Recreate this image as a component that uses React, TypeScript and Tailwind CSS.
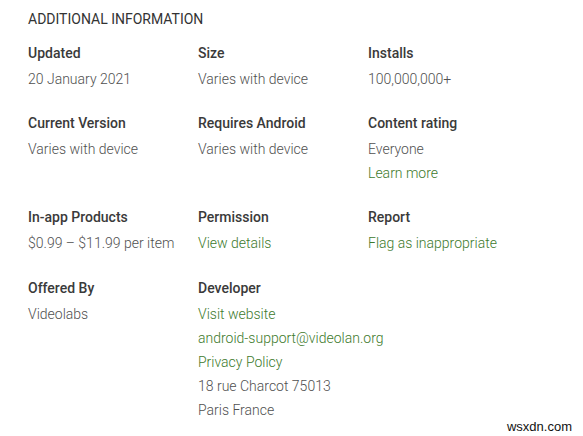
import React from "react";

type Item = { label: string; lines: { text: string; link?: boolean }[] };

const rows: Item[][] = [
  [
    { label: "Updated", lines: [{ text: "20 January 2021" }] },
    { label: "Size", lines: [{ text: "Varies with device" }] },
    { label: "Installs", lines: [{ text: "100,000,000+" }] },
  ],
  [
    { label: "Current Version", lines: [{ text: "Varies with device" }] },
    { label: "Requires Android", lines: [{ text: "Varies with device" }] },
    { label: "Content rating", lines: [{ text: "Everyone" }, { text: "Learn more", link: true }] },
  ],
  [
    { label: "In-app Products", lines: [{ text: "$0.99 – $11.99 per item" }] },
    { label: "Permission", lines: [{ text: "View details", link: true }] },
    { label: "Report", lines: [{ text: "Flag as inappropriate", link: true }] },
  ],
  [
    { label: "Offered By", lines: [{ text: "Videolabs" }] },
    {
      label: "Developer",
      lines: [
        { text: "Visit website", link: true },
        { text: "android-support@videolan.org", link: true },
        { text: "Privacy Policy", link: true },
        { text: "18 rue Charcot 75013" },
        { text: "Paris France" },
      ],
    },
  ],
];

export default function App() {
  return (
    <div
      className="relative w-[583px] h-[436px] bg-white overflow-hidden pl-[28px] pt-[7px]"
      style={{ fontFamily: "Roboto, 'Liberation Sans', sans-serif" }}
    >
      <div className="text-[14px] leading-[24px] text-[#333333]">ADDITIONAL INFORMATION</div>
      <div className="mt-[10px] flex flex-col gap-[20px]">
        {rows.map((row, i) => (
          <div key={i} className={"grid grid-cols-[170px_170px_170px]" + (i === 3 ? " mt-[1px]" : "")}>
            {row.map((item) => (
              <div key={item.label} className="flex flex-col">
                <div className="text-[14px] leading-[24px] font-medium text-[#3a3a3a]">{item.label}</div>
                <div className="mt-[2px] flex flex-col">
                  {item.lines.map((l) => (
                    <div
                      key={l.text}
                      className={
                        "text-[14px] leading-[24px] font-light whitespace-nowrap " +
                        (l.link ? "text-[#3d7a2c]" : "text-[#505050]")
                      }
                    >
                      {l.text}
                    </div>
                  ))}
                </div>
              </div>
            ))}
          </div>
        ))}
      </div>
      <div
        className="absolute right-[11px] bottom-[2px] text-[13px] leading-[15px] text-[#111111]"
        style={{ fontFamily: "'Liberation Sans', Arial, sans-serif" }}
      >
        wsxdn.com
      </div>
    </div>
  );
}
